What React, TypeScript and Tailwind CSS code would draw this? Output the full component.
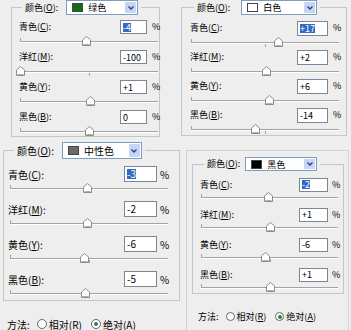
import type { CSSProperties } from "react";

type Channel = {
  name: string;
  hot: string;
  value: string;
  num: number;
  selected?: boolean;
};

type Variant = {
  text: string;
  fieldset: string;
  legend: string;
  legendGap: string;
  select: string;
  body: string;
  rows: string;
  line: string;
  input: string;
  pct: string;
  slider: string;
};

const uiFont = "font-['Noto_Sans_CJK_SC','Noto_Sans',sans-serif]";

function HotLabel({ name, hot, colon = true }: { name: string; hot: string; colon?: boolean }) {
  return (
    <span className="whitespace-nowrap">
      {name}(<span className="underline underline-offset-1">{hot}</span>){colon ? ":" : ""}
    </span>
  );
}

function Thumb({ style }: { style: CSSProperties }) {
  return (
    <svg
      className="absolute top-[-5px]"
      style={style}
      width="9"
      height="10"
      viewBox="0 0 9 10"
    >
      <path d="M0.5 4 L4.5 0.5 L8.5 4 V9.5 H0.5 Z" fill="#fff" stroke="#8b8b8b" />
      <path d="M1.5 8.5 H7.5" stroke="#8fc78f" />
    </svg>
  );
}

function Slider({ value, className }: { value: number; className: string }) {
  const left = ((value + 100) / 200) * 100;
  return (
    <div className={`relative h-[2px] ${className}`}>
      <div className="h-px bg-[#a3a3a3]" />
      <div className="h-px bg-white" />
      <div className="absolute left-0 top-[-3px] h-[3px] w-px bg-[#a3a3a3]" />
      <div className="absolute left-1/2 top-[2px] h-[3px] w-px bg-[#a3a3a3]" />
      <Thumb style={{ left: `calc(${left}% - 4px)` }} />
    </div>
  );
}

function ColorSelect({
  swatch,
  name,
  className,
}: {
  swatch: string;
  name: string;
  className: string;
}) {
  return (
    <div className={`flex items-center border border-[#7f9db9] bg-white ${className}`}>
      <span className={`ml-[5px] h-[9px] w-[11px] border border-[#444] ${swatch}`} />
      <span className="ml-[5px] flex-1 leading-none">{name}</span>
      <span className="mr-px flex h-[calc(100%-2px)] w-[11px] items-center justify-center rounded-[1px] bg-[#c5d5f7]">
        <svg width="6" height="4" viewBox="0 0 6 4">
          <path d="M0.5 0.5 L3 3 L5.5 0.5" fill="none" stroke="#2c3f73" strokeWidth="1.3" />
        </svg>
      </span>
    </div>
  );
}

function ChannelRow({ ch, v }: { ch: Channel; v: Variant }) {
  return (
    <div className="flex flex-col">
      <div className={`flex items-center ${v.line}`}>
        <span className="flex-1">
          <HotLabel name={ch.name} hot={ch.hot} />
        </span>
        <span
          className={`flex items-center border border-[#7a8794] bg-white pl-[2px] leading-none ${v.input}`}
        >
          {ch.selected ? (
            <span className="bg-[#316ac5] text-white">{ch.value}</span>
          ) : (
            ch.value
          )}
        </span>
        <span className={v.pct}>%</span>
      </div>
      <Slider value={ch.num} className={v.slider} />
    </div>
  );
}

function SelectiveColor({
  swatch,
  colorName,
  channels,
  v,
}: {
  swatch: string;
  colorName: string;
  channels: Channel[];
  v: Variant;
}) {
  return (
    <fieldset className={`border border-[#c6c6c6] ${v.fieldset}`}>
      <legend className={v.legend}>
        <div className={`flex items-center ${v.legendGap}`}>
          <HotLabel name="颜色" hot="O" />
          <ColorSelect swatch={swatch} name={colorName} className={v.select} />
        </div>
      </legend>
      <div className={`flex flex-col ${v.body} ${v.rows}`}>
        {channels.map((ch) => (
          <ChannelRow key={ch.hot} ch={ch} v={v} />
        ))}
      </div>
    </fieldset>
  );
}

function Radio({ checked, className }: { checked?: boolean; className: string }) {
  return (
    <span
      className={`flex items-center justify-center rounded-full border border-[#5b6a78] bg-white ${className}`}
    >
      {checked && <span className="h-[4px] w-[4px] rounded-full bg-[#3a7a3a]" />}
    </span>
  );
}

function MethodRow({ className, radio }: { className: string; radio: string }) {
  return (
    <div className={`flex items-center ${className}`}>
      <span>方法:</span>
      <Radio className={`ml-[7px] ${radio}`} />
      <span className="ml-[2px]">
        <HotLabel name="相对" hot="R" colon={false} />
      </span>
      <Radio checked className={`ml-[9px] ${radio}`} />
      <span className="ml-[2px]">
        <HotLabel name="绝对" hot="A" colon={false} />
      </span>
    </div>
  );
}

const small: Omit<Variant, "fieldset" | "legend" | "legendGap" | "select"> = {
  text: "text-[9px]",
  body: "pt-[5px] pl-[7px] pr-[1px]",
  rows: "gap-[7px]",
  line: "h-[14px]",
  input: "w-[27px] h-[14px]",
  pct: "ml-[5px] w-[6px]",
  slider: "mt-[7px] ml-[1px]",
};

const topLeft: Variant = {
  ...small,
  fieldset: "ml-[11px] w-[149px] pb-[3px]",
  legend: "ml-[10px] px-[3px]",
  legendGap: "gap-[8px]",
  select: "w-[72px] h-[15px]",
};

const topRight: Variant = {
  ...small,
  fieldset: "ml-[4px] w-[166px] pb-[4px]",
  legend: "ml-[12px] px-[3px]",
  legendGap: "gap-[11px]",
  select: "w-[76px] h-[15px]",
  body: "pt-[6px] pl-[8px] pr-[7px]",
  rows: "gap-[6px]",
  input: "w-[31px] h-[15px]",
};

const bottomLeft: Variant = {
  text: "text-[10px]",
  fieldset: "ml-[3px] mt-[2px] w-[177px] pb-[5px]",
  legend: "ml-[10px] px-[3px]",
  legendGap: "gap-[8px]",
  select: "w-[80px] h-[17px]",
  body: "pt-[7px] pl-[4px] pr-[11px]",
  rows: "gap-[11px]",
  line: "h-[16px]",
  input: "w-[33px] h-[16px]",
  pct: "ml-[3px] w-[8px]",
  slider: "mt-[6px] ml-[2px]",
};

const bottomRight: Variant = {
  ...small,
  fieldset: "ml-[5px] mt-[6px] w-[152px] pb-[4px]",
  legend: "ml-[11px] px-[3px]",
  legendGap: "gap-[5px]",
  select: "w-[72px] h-[14px]",
  body: "pt-[7px] pl-[7px] pr-[5px]",
  rows: "gap-[9px]",
  line: "h-[13px]",
  input: "w-[29px] h-[14px]",
  pct: "ml-[4px] w-[6px]",
  slider: "mt-[6px] ml-[1px]",
};

export default function App() {
  return (
    <div className={`h-[330px] w-[351px] overflow-hidden bg-[#eeeeee] text-black ${uiFont}`}>
      <div className="flex h-[140px]">
        <div className={`w-[177px] ${topLeft.text}`}>
          <SelectiveColor
            swatch="bg-[#0f6f12]"
            colorName="绿色"
            v={topLeft}
            channels={[
              { name: "青色", hot: "C", value: "-4", num: -4, selected: true },
              { name: "洋红", hot: "M", value: "-100", num: -100 },
              { name: "黄色", hot: "Y", value: "+1", num: 1 },
              { name: "黑色", hot: "B", value: "0", num: 0 },
            ]}
          />
        </div>
        <div className={`w-[174px] ${topRight.text}`}>
          <SelectiveColor
            swatch="bg-white"
            colorName="白色"
            v={topRight}
            channels={[
              { name: "青色", hot: "C", value: "+17", num: 17, selected: true },
              { name: "洋红", hot: "M", value: "+2", num: 2 },
              { name: "黄色", hot: "Y", value: "+6", num: 6 },
              { name: "黑色", hot: "B", value: "-14", num: -14 },
            ]}
          />
        </div>
      </div>
      <div className="flex h-[190px]">
        <div className={`w-[183px] ${bottomLeft.text}`}>
          <SelectiveColor
            swatch="bg-[#6b6b6b]"
            colorName="中性色"
            v={bottomLeft}
            channels={[
              { name: "青色", hot: "C", value: "-3", num: -3, selected: true },
              { name: "洋红", hot: "M", value: "-2", num: -2 },
              { name: "黄色", hot: "Y", value: "-6", num: -6 },
              { name: "黑色", hot: "B", value: "-5", num: -5 },
            ]}
          />
          <MethodRow className="ml-[7px] mt-[16px] h-[14px]" radio="h-[10px] w-[10px]" />
        </div>
        <div
          className={`ml-[3px] mt-[10px] w-[163px] border-x border-t border-[#d2d2d2] ${bottomRight.text}`}
        >
          <SelectiveColor
            swatch="bg-black"
            colorName="黑色"
            v={bottomRight}
            channels={[
              { name: "青色", hot: "C", value: "-2", num: -2, selected: true },
              { name: "洋红", hot: "M", value: "+1", num: 1 },
              { name: "黄色", hot: "Y", value: "-6", num: -6 },
              { name: "黑色", hot: "B", value: "+1", num: 1 },
            ]}
          />
          <MethodRow className="ml-[11px] mt-[16px] h-[13px]" radio="h-[9px] w-[9px]" />
        </div>
      </div>
    </div>
  );
}
